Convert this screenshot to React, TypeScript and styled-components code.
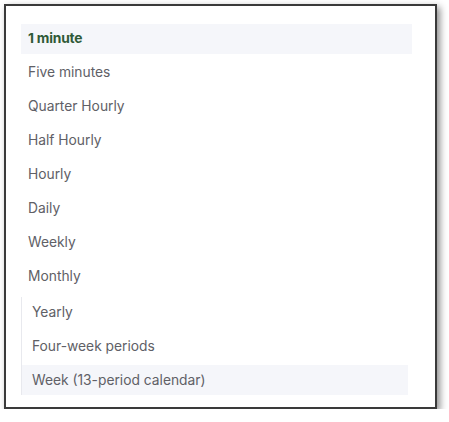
import React from "react";
import styled, {createGlobalStyle} from "styled-components";

const GlobalStyle = createGlobalStyle`
  body {
    margin: 0;
    background: #ffffff;
    font-family: Inter, "Noto Sans", sans-serif;
  }
`;

const Frame = styled.div`
  margin: 4px 0 0 4px;
  width: 433px;
  box-sizing: border-box;
  border: 2px solid #3a3a3a;
  background: #ffffff;
  box-shadow: 3px 3px 7px rgba(0, 0, 0, 0.45);
  padding: 18px 23px 12px 15px;
`;

const List = styled.ul`
  list-style: none;
  margin: 0;
  padding: 0;
  display: flex;
  flex-direction: column;
  gap: 4px;
`;

const SubList = styled(List)`
  margin: 1px 4px 0 0;
  border-left: 1px solid #e8e9ee;
`;

const Item = styled.li<{$selected?: boolean; $active?: boolean; $nested?: boolean}>`
  height: 30px;
  box-sizing: border-box;
  display: flex;
  align-items: center;
  padding: ${(p) => (p.$nested ? "0 10px" : "0 7px 3px")};
  font-size: 13.8px;
  color: ${(p) => (p.$selected ? "#2f5a37" : "#606066")};
  font-weight: ${(p) => (p.$selected ? 700 : 400)};
  letter-spacing: ${(p) => (p.$selected ? "-0.2px" : "0")};
  background: ${(p) => (p.$selected || p.$active ? "#f5f6fa" : "transparent")};
`;

const topItems = [
  "1 minute",
  "Five minutes",
  "Quarter Hourly",
  "Half Hourly",
  "Hourly",
  "Daily",
  "Weekly",
  "Monthly",
];

const nestedItems = ["Yearly", "Four-week periods", "Week (13-period calendar)"];

const App: React.FC = () => {
  return (
    <>
      <GlobalStyle />
      <Frame>
        <List>
          {topItems.map((label, index) => (
            <Item key={label} $selected={index === 0}>
              {label}
            </Item>
          ))}
          <li>
            <SubList>
              {nestedItems.map((label, index) => (
                <Item
                  key={label}
                  $nested
                  $active={index === nestedItems.length - 1}
                >
                  {label}
                </Item>
              ))}
            </SubList>
          </li>
        </List>
      </Frame>
    </>
  );
};

export default App;
